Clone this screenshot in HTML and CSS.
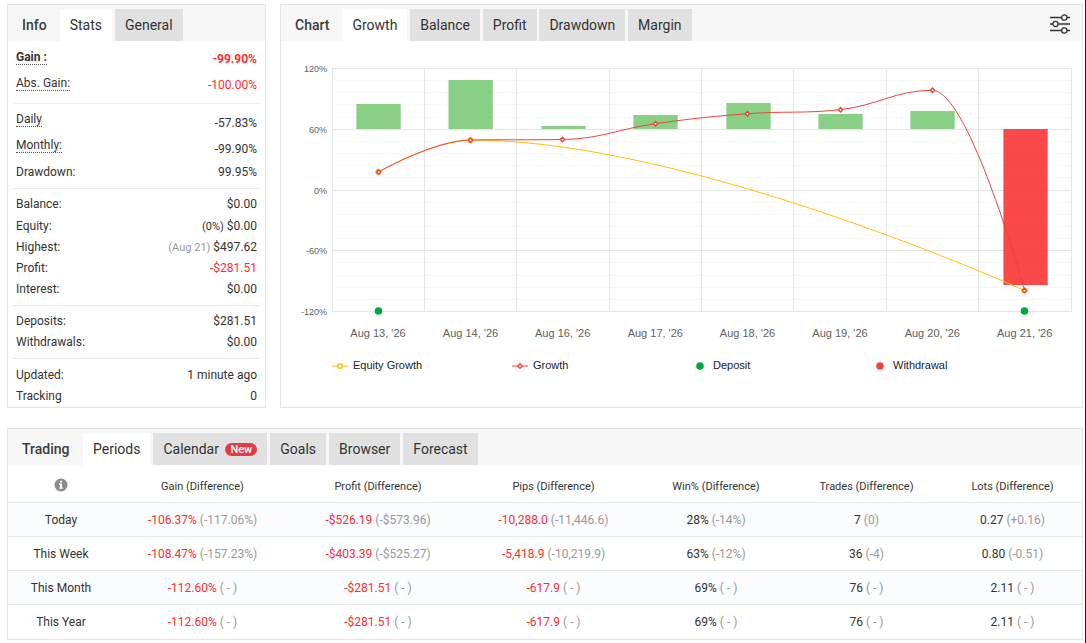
FILE: index.html
```html
<!DOCTYPE html>
<html lang="en">
  <head>
    <meta charset="UTF-8" />
    <meta name="viewport" content="width=device-width, initial-scale=1.0" />
    <title>Account Statistics</title>
    <link rel="stylesheet" href="styles.css">
  </head>
  <body>
    <div class="top">
      <section class="panel stats">
        <div class="panel-head">
          <span class="title">Info</span>
          <a class="tab active">Stats</a>
          <a class="tab">General</a>
        </div>
        <div class="group group-gain">
          <div class="row"><b class="hint">Gain :</b><b class="value red">-99.90%</b></div>
          <div class="row"><span class="hint">Abs. Gain:</span><span class="value red">-100.00%</span></div>
        </div>
        <div class="group group-rate">
          <div class="row"><span class="hint">Daily</span><span class="value">-57.83%</span></div>
          <div class="row"><span class="hint">Monthly:</span><span class="value">-99.90%</span></div>
          <div class="row"><span>Drawdown:</span><span>99.95%</span></div>
        </div>
        <div class="group group-balance">
          <div class="row"><span>Balance:</span><span>$0.00</span></div>
          <div class="row"><span>Equity:</span><span><small>(0%)</small> $0.00</span></div>
          <div class="row"><span>Highest:</span><span><small class="gray">(Aug 21)</small> $497.62</span></div>
          <div class="row"><span>Profit:</span><span class="red">-$281.51</span></div>
          <div class="row"><span>Interest:</span><span>$0.00</span></div>
        </div>
        <div class="group group-deposits">
          <div class="row"><span>Deposits:</span><span>$281.51</span></div>
          <div class="row"><span>Withdrawals:</span><span>$0.00</span></div>
        </div>
        <div class="group group-updated">
          <div class="row"><span>Updated:</span><span>1 minute ago</span></div>
          <div class="row"><span>Tracking</span><span>0</span></div>
        </div>
      </section>

      <section class="panel chart">
        <div class="panel-head">
          <span class="title">Chart</span>
          <a class="tab active">Growth</a>
          <a class="tab">Balance</a>
          <a class="tab">Profit</a>
          <a class="tab">Drawdown</a>
          <a class="tab">Margin</a>
          <svg class="settings" width="22" height="22" viewBox="0 0 22 22">
            <path d="M1 4.5H21M1 11H21M1 17.5H21" />
            <circle cx="15.3" cy="4.5" r="2.6" />
            <circle cx="6.5" cy="11" r="2.6" />
            <circle cx="15.3" cy="17.5" r="2.6" />
          </svg>
        </div>
        <svg class="plot" width="801" height="366" viewBox="0 0 801 366">
          <path class="grid-minor" d="M51 39.5H790M51 51.5H790M51 63.5H790M51 76.5H790M51 100.5H790M51 112.5H790M51 124.5H790M51 136.5H790M51 161.5H790M51 173.5H790M51 185.5H790M51 197.5H790M51 221.5H790M51 234.5H790M51 246.5H790M51 258.5H790" />
          <path class="grid" d="M51 27.5H791M51 88.5H790M51 149.5H790M51 209.5H790M51 270.5H791" />
          <path class="grid" d="M51.5 27V271M143.5 27V271M235.5 27V271M328.5 27V271M420.5 27V271M512.5 27V271M605.5 27V271M697.5 27V271M790.5 27V271" />

          <g class="bars">
            <rect x="75.4" y="63" width="44.3" height="25" />
            <rect x="167.5" y="39" width="44.3" height="49" />
            <rect x="260.4" y="85" width="44.3" height="3" />
            <rect x="352.4" y="74" width="44.3" height="14" />
            <rect x="445.4" y="62" width="44.3" height="26" />
            <rect x="537.4" y="73" width="44.3" height="15" />
            <rect x="629.4" y="70" width="44.3" height="18" />
            <rect class="loss" x="722.4" y="88" width="44.3" height="156" />
          </g>

          <path class="line-equity" d="M97.5 131C97.5 131 152.9 99 189.8 99C411.3 99 743.5 249.5 743.5 249.5" />
          <path class="line-growth" d="M97.5 131C97.5 131 152.9 99.5 189.8 99C226.7 98.5 245.2 99 282.1 98.5C319 98 337.5 87.9 374.4 82.7C411.3 77.5 429.8 75.5 466.7 72.7C503.6 69.9 522.1 72.7 559 68.7C595.9 64.7 614.4 49.3 651.3 49.3C688.2 49.3 743.5 249.5 743.5 249.5" />
          <g class="marker-equity">
            <circle cx="97.5" cy="131" r="2.3" />
            <circle cx="189.5" cy="99.3" r="2.3" />
            <circle cx="743.5" cy="249.5" r="2.3" />
          </g>
          <g class="marker-growth">
            <path d="M97.5 128.8l2.2 2.2l-2.2 2.2l-2.2 -2.2z" />
            <path d="M189.5 97.1l2.2 2.2l-2.2 2.2l-2.2 -2.2z" />
            <path d="M281.5 96.3l2.2 2.2l-2.2 2.2l-2.2 -2.2z" />
            <path d="M374.5 80.5l2.2 2.2l-2.2 2.2l-2.2 -2.2z" />
            <path d="M466.5 70.5l2.2 2.2l-2.2 2.2l-2.2 -2.2z" />
            <path d="M559.5 66.5l2.2 2.2l-2.2 2.2l-2.2 -2.2z" />
            <path d="M651.5 47.1l2.2 2.2l-2.2 2.2l-2.2 -2.2z" />
            <path d="M743.5 247.3l2.2 2.2l-2.2 2.2l-2.2 -2.2z" />
          </g>
          <circle class="deposit" cx="97.5" cy="270" r="3.8" />
          <circle class="deposit" cx="743.5" cy="270" r="3.8" />

          <g class="labels-y">
            <text x="46" y="31">120%</text>
            <text x="46" y="92">60%</text>
            <text x="46" y="153">0%</text>
            <text x="46" y="213">-60%</text>
            <text x="46" y="274">-120%</text>
          </g>
          <g class="labels-x">
            <text x="97" y="296">Aug 13, '26</text>
            <text x="189.5" y="296">Aug 14, '26</text>
            <text x="281.7" y="296">Aug 16, '26</text>
            <text x="374.3" y="296">Aug 17, '26</text>
            <text x="466.5" y="296">Aug 18, '26</text>
            <text x="559" y="296">Aug 19, '26</text>
            <text x="651.3" y="296">Aug 20, '26</text>
            <text x="743.7" y="296">Aug 21, '26</text>
          </g>
          <g class="legend">
            <path class="key-equity" d="M51 325H67" />
            <circle class="dot-equity" cx="59" cy="325" r="2.3" />
            <text x="72" y="328">Equity Growth</text>
            <path class="key-growth" d="M231 325H247" />
            <path class="dot-growth" d="M239 322.8l2.2 2.2l-2.2 2.2l-2.2 -2.2z" />
            <text x="252" y="328">Growth</text>
            <circle class="deposit" cx="419" cy="325" r="3.8" />
            <text x="432" y="328">Deposit</text>
            <circle class="withdrawal" cx="599" cy="325" r="3.8" />
            <text x="612" y="328">Withdrawal</text>
          </g>
        </svg>
      </section>
    </div>

    <section class="panel trading">
      <div class="panel-head">
        <span class="title">Trading</span>
        <a class="tab active">Periods</a>
        <a class="tab">Calendar <span class="badge">New</span></a>
        <a class="tab">Goals</a>
        <a class="tab">Browser</a>
        <a class="tab">Forecast</a>
      </div>
      <table>
        <colgroup>
          <col class="c1"><col class="c2"><col class="c3"><col class="c4"><col class="c5"><col class="c6"><col class="c7">
        </colgroup>
        <thead>
          <tr>
            <th>
              <svg class="info" width="14" height="14" viewBox="0 0 14 14">
                <circle cx="7" cy="7" r="6.5" />
                <path d="M6 2.8H8V4.6H6zM5.2 5.6H8V9.4H8.8V10.8H5.2V9.4H6V7H5.2z" />
              </svg>
            </th>
            <th>Gain (Difference)</th>
            <th>Profit (Difference)</th>
            <th>Pips (Difference)</th>
            <th>Win% (Difference)</th>
            <th>Trades (Difference)</th>
            <th>Lots (Difference)</th>
          </tr>
        </thead>
        <tbody>
          <tr>
            <td>Today</td>
            <td><span class="red">-106.37%</span> <span class="gray">(-117.06%)</span></td>
            <td><span class="red">-$526.19</span> <span class="gray">(-$573.96)</span></td>
            <td><span class="red">-10,288.0</span> <span class="gray">(-11,446.6)</span></td>
            <td>28% <span class="gray">(-14%)</span></td>
            <td>7 <span class="gray">(0)</span></td>
            <td>0.27 <span class="gray">(+0.16)</span></td>
          </tr>
          <tr>
            <td>This Week</td>
            <td><span class="red">-108.47%</span> <span class="gray">(-157.23%)</span></td>
            <td><span class="red">-$403.39</span> <span class="gray">(-$525.27)</span></td>
            <td><span class="red">-5,418.9</span> <span class="gray">(-10,219.9)</span></td>
            <td>63% <span class="gray">(-12%)</span></td>
            <td>36 <span class="gray">(-4)</span></td>
            <td>0.80 <span class="gray">(-0.51)</span></td>
          </tr>
          <tr>
            <td>This Month</td>
            <td><span class="red">-112.60%</span> <span class="gray">( - )</span></td>
            <td><span class="red">-$281.51</span> <span class="gray">( - )</span></td>
            <td><span class="red">-617.9</span> <span class="gray">( - )</span></td>
            <td>69% <span class="gray">( - )</span></td>
            <td>76 <span class="gray">( - )</span></td>
            <td>2.11 <span class="gray">( - )</span></td>
          </tr>
          <tr>
            <td>This Year</td>
            <td><span class="red">-112.60%</span> <span class="gray">( - )</span></td>
            <td><span class="red">-$281.51</span> <span class="gray">( - )</span></td>
            <td><span class="red">-617.9</span> <span class="gray">( - )</span></td>
            <td>69% <span class="gray">( - )</span></td>
            <td>76 <span class="gray">( - )</span></td>
            <td>2.11 <span class="gray">( - )</span></td>
          </tr>
        </tbody>
      </table>
    </section>
  </body>
</html>
```
FILE: styles.css
```css
* {
  box-sizing: border-box;
}
body {
  margin: 0;
  height: 643px;
  padding: 4px 2px 0 7px;
  border-right: 1px solid #222;
  background: #fff;
  font-family: Roboto, sans-serif;
  font-size: 12px;
  color: #333;
  overflow: hidden;
}
.top {
  display: flex;
  gap: 14px;
  margin-bottom: 20px;
}
.panel {
  border: 1px solid #e5e5e5;
  background: #fff;
}
.stats {
  width: 259px;
  height: 404px;
}
.chart {
  width: 803px;
  height: 404px;
}
.trading {
  height: 212px;
}

.panel-head {
  display: flex;
  height: 36px;
  padding-top: 4px;
  background: #f7f7f7;
  font-size: 14px;
  line-height: 32px;
}
.title {
  padding: 0 13px 0 14px;
  font-weight: 500;
  color: #3c3c3c;
}
.trading .title {
  padding-right: 13.5px;
}
.tab {
  height: 32px;
  margin-right: 3px;
  padding: 0 10px;
  background: #e1e1e1;
}
.chart .tab {
  margin-right: 2.8px;
}
.tab.active {
  background: #fff;
}
.badge {
  display: inline-block;
  height: 13px;
  margin-left: 3px;
  padding: 0 5px;
  border-radius: 7px;
  background: #e63946;
  color: #fff;
  font-size: 11px;
  font-weight: 500;
  line-height: 13px;
  vertical-align: 1px;
}
.settings {
  margin: 4px 11px 0 auto;
  fill: #f7f7f7;
  stroke: #333;
  stroke-width: 1.3;
}

.group {
  margin: 0 5px;
  padding: 0 3px;
  border-bottom: 1px solid #ebebeb;
}
.row {
  display: flex;
  justify-content: space-between;
  align-items: center;
  height: 21px;
}
.group-gain {
  padding-top: 3px;
  padding-bottom: 7px;
}
.group-rate {
  padding-top: 3px;
  padding-bottom: 3px;
}
.group-gain .row,
.group-rate .row {
  height: 26px;
}
.group-balance {
  padding-top: 4px;
  padding-bottom: 6px;
}
.group-balance .row:first-child {
  height: 22px;
}
.group-deposits {
  padding-top: 4px;
  padding-bottom: 6px;
}
.group-updated {
  padding-top: 5px;
  border-bottom: 0;
}
.hint {
  border-bottom: 1px dotted #555;
}
.value {
  padding-top: 4px;
}
.group-rate .hint {
  margin-top: -1px;
}
.group-rate .value {
  padding-top: 5px;
}
small {
  font-size: 11px;
}
.red {
  color: #ff2d2d;
}
.gray {
  color: #999;
}

.plot {
  display: block;
  font-family: "Liberation Sans", Arial, sans-serif;
  font-size: 11px;
}
.plot path {
  fill: none;
}
.grid {
  stroke: #e6e6e6;
}
.grid-minor {
  stroke: #f7f7f7;
}
.bars rect {
  fill: #77c974;
  fill-opacity: 0.87;
}
.bars .loss {
  fill: #fa2d2d;
}
.line-equity {
  stroke: #ffc107;
}
.line-growth {
  stroke: #ef433c;
}
.marker-equity,
.dot-equity {
  fill: #fff;
  stroke: #ffc107;
  stroke-width: 1.5;
}
.marker-growth path,
.plot .dot-growth {
  fill: #fff;
  stroke: #ef433c;
  stroke-width: 1.4;
}
.deposit {
  fill: #00aa3c;
}
.withdrawal {
  fill: #ef433c;
}
.key-equity {
  stroke: #ffdf80;
  stroke-width: 2;
}
.key-growth {
  stroke: #f99f99;
  stroke-width: 2;
}
.labels-y {
  font-size: 9px;
  fill: #606060;
  text-anchor: end;
}
.labels-x {
  fill: #606060;
  text-anchor: middle;
}
.legend text {
  fill: #222;
}

table {
  width: 1074px;
  table-layout: fixed;
  border-spacing: 0;
  text-align: center;
}
.c1 { width: 106px; }
.c2 { width: 177px; }
.c3 { width: 174px; }
.c4 { width: 177px; }
.c5 { width: 148px; }
.c6 { width: 153px; }
.c7 { width: 139px; }
th {
  height: 38px;
  padding: 5px 0 0;
  border-bottom: 1px solid #e2e8ec;
  font-size: 11px;
  font-weight: 400;
}
td {
  height: 34px;
  padding: 0;
  border-bottom: 1px solid #e2e8ec;
}
tbody tr:nth-child(odd) {
  background: #fafcfe;
}
tbody tr:last-child td {
  border-bottom: 0;
}
.info {
  display: block;
  margin: -2px auto 0;
  fill: #8c8c8c;
}
.info path {
  fill: #fff;
}
```
